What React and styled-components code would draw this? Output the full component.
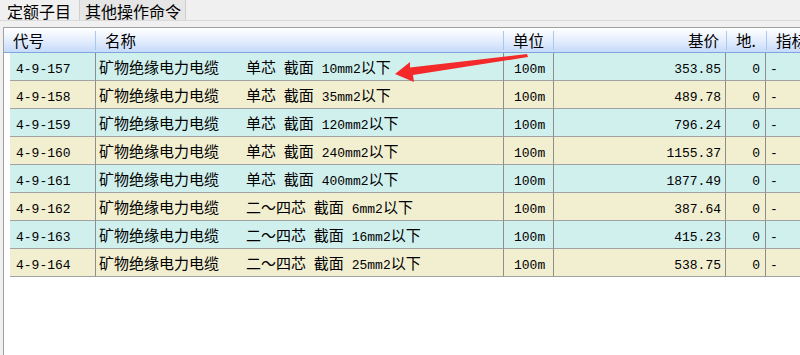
import React from 'react';
import styled, { createGlobalStyle } from 'styled-components';

const GlobalStyle = createGlobalStyle`
  html, body {
    margin: 0;
    padding: 0;
    background: #ffffff;
    font-family: "Noto Sans CJK SC", "Liberation Sans", sans-serif;
    color: #000;
  }
  #root {
    width: 800px;
    height: 355px;
    overflow: hidden;
  }
`;

const Page = styled.div`
  position: relative;
  width: 800px;
  height: 355px;
  display: flex;
  flex-direction: column;
  background: #f0f0f0;
  overflow: hidden;
`;

const TabBar = styled.div`
  display: flex;
  align-items: flex-start;
  height: 20px;
  border-bottom: 1px solid #dadada;
`;

const Tab = styled.div`
  height: 20px;
  padding: 0 ${(p) => (p.active ? '8px' : '4px')} 0 ${(p) => (p.active ? '7px' : '5px')};
  font-size: 16px;
  line-height: 23px;
  background: ${(p) => (p.active ? '#f0f0f0' : '#e6e6e6')};
  border-left: ${(p) => (p.active ? 'none' : '1px solid #cfcfcf')};
  border-right: ${(p) => (p.active ? 'none' : '1px solid #cfcfcf')};
  white-space: nowrap;
`;

const GridBox = styled.div`
  flex: 1;
  margin: 6px 0 0 3px;
  background: #ffffff;
  border-top: 1px solid #a0a0a0;
  border-left: 1px solid #a0a0a0;
  overflow: hidden;
`;

const HeaderRow = styled.div`
  display: grid;
  grid-template-columns: 92px 408px 50px 173px 40px 80px;
  height: 24px;
  background: linear-gradient(#ffffff 0%, #eef4fe 35%, #c6dafa 100%);
  border-bottom: 1px solid #7fa5dc;
`;

const HeadCell = styled.div`
  position: relative;
  font-size: 15.5px;
  line-height: 24px;
  padding: 0 ${(p) => (p.right ? '8px' : '0')} 0 ${(p) => (p.right ? '0' : '9px')};
  text-align: ${(p) => (p.right ? 'right' : 'left')};
  white-space: nowrap;
  &::after {
    content: '';
    position: absolute;
    right: 0;
    top: 3px;
    bottom: 2px;
    width: 1px;
    background: #a9c8ef;
  }
`;

const Row = styled.div`
  display: grid;
  grid-template-columns: 6px 86px 408px 50px 172px 40px 80px;
  height: 28px;
`;

const Gutter = styled.div`
  background: #ffffff;
`;

const Cell = styled.div`
  background: ${(p) => (p.tone === 'cyan' ? '#d0f0ee' : '#f2efd1')};
  border-right: 1px solid #8e8e8e;
  border-bottom: 1px solid #a2a2a2;
  font-size: 15px;
  line-height: 28px;
  padding: 0 ${(p) => p.pr || 0}px 0 ${(p) => p.pl || 0}px;
  text-align: ${(p) => (p.right ? 'right' : 'left')};
  white-space: nowrap;
  overflow: hidden;
`;

const Latin = styled.span`
  font-family: "Liberation Mono", "DejaVu Sans Mono", monospace;
  font-size: 13px;
`;

const Spec = styled.span`
  margin-left: 27px;
  white-space: pre;
`;

const Arrow = styled.svg`
  position: absolute;
  left: 0;
  top: 0;
  pointer-events: none;
`;

const rows = [
  { code: '4-9-157', core: '单芯', size: '10mm2', price: '353.85' },
  { code: '4-9-158', core: '单芯', size: '35mm2', price: '489.78' },
  { code: '4-9-159', core: '单芯', size: '120mm2', price: '796.24' },
  { code: '4-9-160', core: '单芯', size: '240mm2', price: '1155.37' },
  { code: '4-9-161', core: '单芯', size: '400mm2', price: '1877.49' },
  { code: '4-9-162', core: '二～四芯', size: '6mm2', price: '387.64' },
  { code: '4-9-163', core: '二～四芯', size: '16mm2', price: '415.23' },
  { code: '4-9-164', core: '二～四芯', size: '25mm2', price: '538.75' },
];

export default function App() {
  return (
    <Page>
      <GlobalStyle />
      <TabBar>
        <Tab active>定额子目</Tab>
        <Tab>其他操作命令</Tab>
      </TabBar>
      <GridBox>
        <HeaderRow>
          <HeadCell>代号</HeadCell>
          <HeadCell>名称</HeadCell>
          <HeadCell>单位</HeadCell>
          <HeadCell right>基价</HeadCell>
          <HeadCell>地.</HeadCell>
          <HeadCell>指标</HeadCell>
        </HeaderRow>
        {rows.map((r, i) => {
          const tone = i % 2 === 0 ? 'cyan' : 'beige';
          return (
            <Row key={r.code}>
              <Gutter />
              <Cell tone={tone} pl={6}><Latin>{r.code}</Latin></Cell>
              <Cell tone={tone} pl={3}>
                矿物绝缘电力电缆
                <Spec>
                  {r.core}<Latin> </Latin>截面<Latin> {r.size}</Latin>以下
                </Spec>
              </Cell>
              <Cell tone={tone} pl={10}><Latin>100m</Latin></Cell>
              <Cell tone={tone} right pr={4}><Latin>{r.price}</Latin></Cell>
              <Cell tone={tone} right pr={5}><Latin>0</Latin></Cell>
              <Cell tone={tone} pl={4}><Latin>-</Latin></Cell>
            </Row>
          );
        })}
      </GridBox>
      <Arrow width="800" height="355" viewBox="0 0 800 355">
        <polygon
          points="395,74 410,62 410,67.5 527,54 528,57 413,75 414,82"
          fill="#f42a2a"
        />
      </Arrow>
    </Page>
  );
}
